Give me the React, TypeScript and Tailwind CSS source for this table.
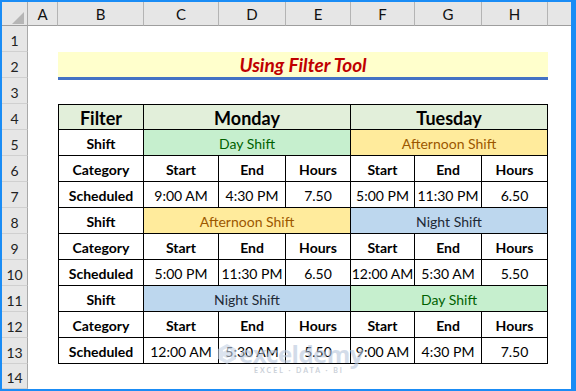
import React from "react";

type Kind = "head" | "label" | "sub" | "val" | "day" | "aft" | "night";
type Cell = { t: string; k: Kind; span?: number };

const sub = (): Cell[] => [
  { t: "Category", k: "label" },
  { t: "Start", k: "sub" },
  { t: "End", k: "sub" },
  { t: "Hours", k: "sub" },
  { t: "Start", k: "sub" },
  { t: "End", k: "sub" },
  { t: "Hours", k: "sub" },
];

const vals = (a: string[]): Cell[] => [
  { t: "Scheduled", k: "label" },
  ...a.map((t) => ({ t, k: "val" as Kind })),
];

const tableRows: Cell[][] = [
  [
    { t: "Filter", k: "head" },
    { t: "Monday", k: "head", span: 3 },
    { t: "Tuesday", k: "head", span: 3 },
  ],
  [
    { t: "Shift", k: "label" },
    { t: "Day Shift", k: "day", span: 3 },
    { t: "Afternoon Shift", k: "aft", span: 3 },
  ],
  sub(),
  vals(["9:00 AM", "4:30 PM", "7.50", "5:00 PM", "11:30 PM", "6.50"]),
  [
    { t: "Shift", k: "label" },
    { t: "Afternoon Shift", k: "aft", span: 3 },
    { t: "Night Shift", k: "night", span: 3 },
  ],
  sub(),
  vals(["5:00 PM", "11:30 PM", "6.50", "12:00 AM", "5:30 AM", "5.50"]),
  [
    { t: "Shift", k: "label" },
    { t: "Night Shift", k: "night", span: 3 },
    { t: "Day Shift", k: "day", span: 3 },
  ],
  sub(),
  vals(["12:00 AM", "5:30 AM", "5.50", "9:00 AM", "4:30 PM", "7.50"]),
];

const kindClass: Record<Kind, string> = {
  head: "bg-[#e2efda] font-bold text-[18px] text-black",
  label: "font-bold text-[14px] text-black",
  sub: "font-bold text-[14px] text-black",
  val: "text-[14px] text-black",
  day: "bg-[#c6efce] text-[14px] text-[#006100]",
  aft: "bg-[#ffeb9c] text-[14px] text-[#9c5700]",
  night: "bg-[#bdd7ee] text-[14px] text-[#1f2a36]",
};

const spanClass = (s?: number) => (s === 3 ? "col-span-3" : "");

function RowHead({ n }: { n: number }) {
  return (
    <div className="flex items-end justify-center pb-[3px] bg-[#e6e6e6] border-r border-b border-r-[#a9a9a9] border-b-[#d0d0d0] text-[14px] text-[#222] leading-none">
      {n}
    </div>
  );
}

const colLetters = ["A", "B", "C", "D", "E", "F", "G", "H"];

export default function App() {
  return (
    <div
      className="relative w-[576px] h-[391px] bg-[#1a8cf5] pt-[2px] pl-[2px] pr-[5px] pb-[2px] overflow-hidden"
      style={{ fontFamily: "Lato, 'Open Sans', sans-serif" }}
    >
      <div className="grid w-[569px] h-[387px] bg-white grid-cols-[26px_30px_86px_75px_67px_65px_64px_67px_66px_1fr] grid-rows-[24px_repeat(13,26px)_1fr]">
        {/* corner */}
        <div className="relative bg-[#e6e6e6] border-r border-b border-r-[#a9a9a9] border-b-[#9e9e9e]">
          <svg className="absolute left-[10px] top-[10px]" width="12" height="12" viewBox="0 0 12 12">
            <polygon points="12,0 12,12 0,12" fill="#b5b5b5" />
          </svg>
        </div>
        {colLetters.map((c) => (
          <div
            key={c}
            className="flex items-center justify-center pt-[2px] bg-[#e6e6e6] border-r border-b border-r-[#b4b4b4] border-b-[#9e9e9e] text-[15px] text-[#111] leading-none"
          >
            {c}
          </div>
        ))}
        <div className="bg-[#e6e6e6] border-b border-b-[#9e9e9e]" />

        {/* row 1 */}
        <RowHead n={1} />
        <div className="col-span-9" />

        {/* row 2 */}
        <RowHead n={2} />
        <div />
        <div className="col-span-7 self-start h-[28px] bg-[#ffffcc] border-b-[3px] border-[#4472c4] flex items-center justify-center pb-[1px]">
          <span className="font-bold italic text-[19px] text-[#c00000] leading-none">Using Filter Tool</span>
        </div>
        <div />

        {/* row 3 */}
        <RowHead n={3} />
        <div className="col-span-9" />

        {tableRows.map((row, ri) => (
          <React.Fragment key={ri}>
            <RowHead n={ri + 4} />
            <div />
            {row.map((cell, ci) => (
              <div
                key={ci}
                className={
                  "flex items-center justify-center pt-[2px] leading-none whitespace-nowrap border-r border-b border-black " +
                  (ci === 0 ? "border-l " : "") +
                  (ri === 0 ? "border-t " : "") +
                  spanClass(cell.span) +
                  " " +
                  kindClass[cell.k]
                }
              >
                {cell.t}
              </div>
            ))}
            <div />
          </React.Fragment>
        ))}

        {/* row 14 */}
        <RowHead n={14} />
        <div className="col-span-9" />
      </div>

      {/* watermark */}
      <div className="absolute left-[217px] top-[342px] flex flex-col items-center opacity-60 pointer-events-none">
        <div className="flex items-center gap-[2px]">
          <svg width="20" height="22" viewBox="0 0 20 22">
            <polygon points="10,1 19,6 19,16 10,21 1,16 1,6" fill="#c5d3e6" />
            <path d="M6 8 L10 6 L14 8 M6 14 L10 16 L14 14" stroke="#ffffff" strokeWidth="1.6" fill="none" />
          </svg>
          <span className="text-[24px] font-bold leading-none text-[#b7c6dc] tracking-[-0.5px]" style={{ fontFamily: "'Open Sans', sans-serif" }}>
            exceldemy
          </span>
        </div>
        <span className="text-[7px] font-bold leading-none tracking-[2px] text-[#a9b3bf] ml-[18px] mt-[1px]">
          EXCEL · DATA · BI
        </span>
      </div>
    </div>
  );
}
